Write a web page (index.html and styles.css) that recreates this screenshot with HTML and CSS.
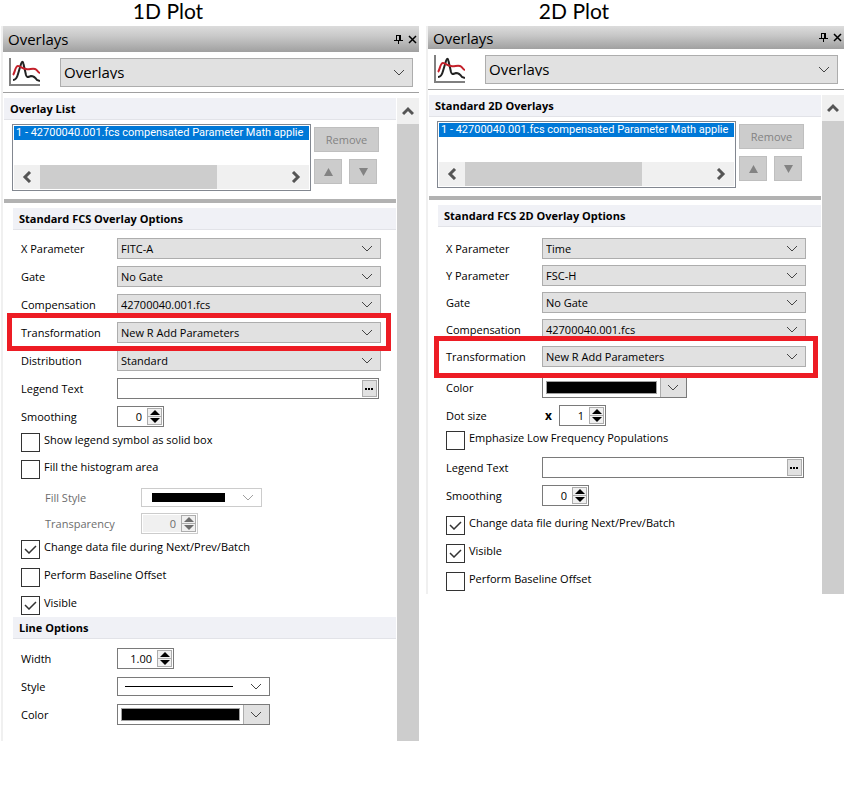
FILE: index.html
```html
<!DOCTYPE html>
<html lang="en">
<head>
  <meta charset="UTF-8" />
  <meta name="viewport" content="width=device-width, initial-scale=1.0"/>
  <title>Overlays</title>
  <link rel="stylesheet" href="styles.css">
</head>
<body>

  <!-- shared icons -->
  <svg class="defs" width="0" height="0">
    <symbol id="plot" viewBox="0 0 31 29">
      <path d="M1 0V28M0 27H31" fill="none" stroke="#808080" stroke-width="2"/>
      <path d="M4 22C7 22 8 20 9 16L12 6C13 3 14 3 14.500 6L17 17C18 20 19 19 22 18C25 18 26 19 28 22L31 23" fill="none" stroke="#222" stroke-width="2"/>
      <path d="M4 17C6 15 6 8 9 8C12 8 13 11 17 11C20 12 23 10 26 11C29 12 28 14 31 15" fill="none" stroke="#c4202a" stroke-width="2"/>
    </symbol>
    <symbol id="pin" viewBox="0 0 9 9">
      <path d="M2 0H7V5H9V6H5V9H4V6H0V5H2ZM3 1V5H5V1Z" fill="#000" fill-rule="evenodd"/>
    </symbol>
    <symbol id="close" viewBox="0 0 9 9">
      <path d="M1 1L8 8M8 1L1 8" stroke="#000" stroke-width="1.500"/>
    </symbol>
    <symbol id="left" viewBox="0 0 10 12">
      <path d="M8 1L3 6L8 11" fill="none" stroke="#555" stroke-width="3"/>
    </symbol>
    <symbol id="right" viewBox="0 0 10 12">
      <path d="M2 1L7 6L2 11" fill="none" stroke="#555" stroke-width="3"/>
    </symbol>
    <symbol id="top" viewBox="0 0 12 10">
      <path d="M1 8L6 3L11 8" fill="none" stroke="#555" stroke-width="3"/>
    </symbol>
    <symbol id="up" viewBox="0 0 10 5"><path d="M5 0L10 5H0Z" fill="currentColor"/></symbol>
    <symbol id="down" viewBox="0 0 10 5"><path d="M0 0H10L5 5Z" fill="currentColor"/></symbol>
    <symbol id="dots" viewBox="0 0 9 2"><path d="M0 0H2V2H0ZM3 0H5V2H3ZM6 0H8V2H6Z" fill="#000"/></symbol>
  </svg>

  <main class="plots">

    <section class="plot plot-1d">
      <h1>1D Plot</h1>
      <div class="panel">
        <header class="titlebar">
          <h2>Overlays</h2>
          <button class="tool" aria-label="Pin"><svg width="9" height="9"><use href="#pin"/></svg></button>
          <button class="tool" aria-label="Close"><svg width="9" height="9"><use href="#close"/></svg></button>
        </header>
        <div class="toolbar">
          <svg width="31" height="29"><use href="#plot"/></svg>
          <select class="page-select" aria-label="Page"><option>Overlays</option></select>
        </div>
        <div class="main">
          <div class="content">
            <h3>Overlay List</h3>
            <div class="overlay-list">
              <div class="listbox">
                <div class="item">1 - 42700040.001.fcs compensated Parameter Math applie</div>
                <div class="hscroll">
                  <svg width="10" height="12"><use href="#left"/></svg>
                  <div class="track"><div class="thumb"></div></div>
                  <svg width="10" height="12"><use href="#right"/></svg>
                </div>
              </div>
              <div class="list-buttons">
                <button class="remove" disabled>Remove</button>
                <button disabled aria-label="Move up"><svg width="9" height="8" viewBox="0 0 10 5" preserveAspectRatio="none"><path d="M5 0L10 5H0Z" fill="#838383"/></svg></button>
                <button disabled aria-label="Move down"><svg width="9" height="8" viewBox="0 0 10 5" preserveAspectRatio="none"><path d="M0 0H10L5 5Z" fill="#838383"/></svg></button>
              </div>
            </div>
            <div class="options">
              <h3>Standard FCS Overlay Options</h3>
              <div class="fields">
                <div class="row">
                  <label for="x1">X Parameter</label>
                  <select id="x1"><option>FITC-A</option></select>
                </div>
                <div class="row">
                  <label for="gate1">Gate</label>
                  <select id="gate1"><option>No Gate</option></select>
                </div>
                <div class="row">
                  <label for="comp1">Compensation</label>
                  <select id="comp1"><option>42700040.001.fcs</option></select>
                </div>
                <div class="row marked">
                  <label for="trans1">Transformation</label>
                  <select id="trans1"><option>New R Add Parameters</option></select>
                </div>
                <div class="row">
                  <label for="dist1">Distribution</label>
                  <select id="dist1"><option>Standard</option></select>
                </div>
                <div class="row">
                  <label for="legend1">Legend Text</label>
                  <div class="box legend">
                    <input type="text" id="legend1">
                    <button aria-label="Edit legend"><svg width="9" height="2"><use href="#dots"/></svg></button>
                  </div>
                </div>
                <div class="row close">
                  <label for="smooth1">Smoothing</label>
                  <div class="box spin">
                    <input type="text" id="smooth1" value="0">
                    <div class="arrows">
                      <button aria-label="Increase"><svg width="10" height="5"><use href="#up"/></svg></button>
                      <button aria-label="Decrease"><svg width="10" height="5"><use href="#down"/></svg></button>
                    </div>
                  </div>
                </div>
                <label class="check tight"><input type="checkbox"> Show legend symbol as solid box</label>
                <label class="check tight"><input type="checkbox"> Fill the histogram area</label>
                <div class="sub">
                  <div class="row">
                    <label for="fill1">Fill Style</label>
                    <div class="box picker fill">
                      <span class="swatch"></span>
                      <select id="fill1" disabled><option></option></select>
                    </div>
                  </div>
                  <div class="row">
                    <label for="transp1">Transparency</label>
                    <div class="box spin wide">
                      <input type="text" id="transp1" value="0" disabled>
                      <div class="arrows">
                        <button disabled aria-label="Increase"><svg width="10" height="5"><use href="#up"/></svg></button>
                        <button disabled aria-label="Decrease"><svg width="10" height="5"><use href="#down"/></svg></button>
                      </div>
                    </div>
                  </div>
                </div>
                <label class="check"><input type="checkbox" checked> Change data file during Next/Prev/Batch</label>
                <label class="check"><input type="checkbox"> Perform Baseline Offset</label>
                <label class="check"><input type="checkbox" checked> Visible</label>
              </div>
              <h3>Line Options</h3>
              <div class="fields line-fields">
                <div class="row">
                  <label for="width1">Width</label>
                  <div class="box spin wide">
                    <input type="text" id="width1" value="1.00">
                    <div class="arrows">
                      <button aria-label="Increase"><svg width="10" height="5"><use href="#up"/></svg></button>
                      <button aria-label="Decrease"><svg width="10" height="5"><use href="#down"/></svg></button>
                    </div>
                  </div>
                </div>
                <div class="row">
                  <label for="style1">Style</label>
                  <div class="box picker line">
                    <span class="swatch"></span>
                    <select id="style1"><option></option></select>
                  </div>
                </div>
                <div class="row">
                  <label for="color1">Color</label>
                  <div class="box picker color">
                    <span class="swatch"></span>
                    <select id="color1"><option></option></select>
                  </div>
                </div>
              </div>
            </div>
          </div>
          <div class="vscroll"><div class="up"><svg width="12" height="10"><use href="#top"/></svg></div></div>
        </div>
      </div>
    </section>

    <section class="plot plot-2d">
      <h1>2D Plot</h1>
      <div class="panel">
        <header class="titlebar">
          <h2>Overlays</h2>
          <button class="tool" aria-label="Pin"><svg width="9" height="9"><use href="#pin"/></svg></button>
          <button class="tool" aria-label="Close"><svg width="9" height="9"><use href="#close"/></svg></button>
        </header>
        <div class="toolbar">
          <svg width="31" height="29"><use href="#plot"/></svg>
          <select class="page-select" aria-label="Page"><option>Overlays</option></select>
        </div>
        <div class="main">
          <div class="content">
            <h3>Standard 2D Overlays</h3>
            <div class="overlay-list">
              <div class="listbox">
                <div class="item">1 - 42700040.001.fcs compensated Parameter Math applie</div>
                <div class="hscroll">
                  <svg width="10" height="12"><use href="#left"/></svg>
                  <div class="track"><div class="thumb"></div></div>
                  <svg width="10" height="12"><use href="#right"/></svg>
                </div>
              </div>
              <div class="list-buttons">
                <button class="remove" disabled>Remove</button>
                <button disabled aria-label="Move up"><svg width="9" height="8" viewBox="0 0 10 5" preserveAspectRatio="none"><path d="M5 0L10 5H0Z" fill="#838383"/></svg></button>
                <button disabled aria-label="Move down"><svg width="9" height="8" viewBox="0 0 10 5" preserveAspectRatio="none"><path d="M0 0H10L5 5Z" fill="#838383"/></svg></button>
              </div>
            </div>
            <div class="options">
              <h3>Standard FCS 2D Overlay Options</h3>
              <div class="fields">
                <div class="row close">
                  <label for="x2">X Parameter</label>
                  <select id="x2"><option>Time</option></select>
                </div>
                <div class="row close">
                  <label for="y2">Y Parameter</label>
                  <select id="y2"><option>FSC-H</option></select>
                </div>
                <div class="row close">
                  <label for="gate2">Gate</label>
                  <select id="gate2"><option>No Gate</option></select>
                </div>
                <div class="row close">
                  <label for="comp2">Compensation</label>
                  <select id="comp2"><option>42700040.001.fcs</option></select>
                </div>
                <div class="row marked">
                  <label for="trans2">Transformation</label>
                  <select id="trans2"><option>New R Add Parameters</option></select>
                </div>
                <div class="row">
                  <label for="color2">Color</label>
                  <div class="box picker color">
                    <span class="swatch"></span>
                    <select id="color2"><option></option></select>
                  </div>
                </div>
                <div class="row snug">
                  <label for="dot2">Dot size</label>
                  <b class="times">x</b>
                  <div class="box spin">
                    <input type="text" id="dot2" value="1">
                    <div class="arrows">
                      <button aria-label="Increase"><svg width="10" height="5"><use href="#up"/></svg></button>
                      <button aria-label="Decrease"><svg width="10" height="5"><use href="#down"/></svg></button>
                    </div>
                  </div>
                </div>
                <label class="check tight"><input type="checkbox"> Emphasize Low Frequency Populations</label>
                <div class="row">
                  <label for="legend2">Legend Text</label>
                  <div class="box legend">
                    <input type="text" id="legend2">
                    <button aria-label="Edit legend"><svg width="9" height="2"><use href="#dots"/></svg></button>
                  </div>
                </div>
                <div class="row loose">
                  <label for="smooth2">Smoothing</label>
                  <div class="box spin">
                    <input type="text" id="smooth2" value="0">
                    <div class="arrows">
                      <button aria-label="Increase"><svg width="10" height="5"><use href="#up"/></svg></button>
                      <button aria-label="Decrease"><svg width="10" height="5"><use href="#down"/></svg></button>
                    </div>
                  </div>
                </div>
                <label class="check"><input type="checkbox" checked> Change data file during Next/Prev/Batch</label>
                <label class="check"><input type="checkbox" checked> Visible</label>
                <label class="check"><input type="checkbox"> Perform Baseline Offset</label>
              </div>
            </div>
          </div>
          <div class="vscroll"><div class="up"><svg width="12" height="10"><use href="#top"/></svg></div></div>
        </div>
      </div>
    </section>

  </main>

</body>
</html>
```
FILE: styles.css
```css
* {
  box-sizing: border-box;
}

body {
  margin: 0;
  background: white;
  font-family: "Open Sans", "Noto Sans", sans-serif;
  font-size: 11px;
  line-height: 14px;
  color: black;
}

h1, h2, h3 {
  margin: 0;
}

svg {
  display: block;
  flex: none;
}

.defs {
  position: absolute;
}

input, select, button {
  font: inherit;
  color: inherit;
  margin: 0;
  padding: 0;
  border: none;
  border-radius: 0;
  background: none;
}

button {
  display: flex;
  align-items: center;
  justify-content: center;
}

.plots {
  display: grid;
  grid-template-columns: minmax(0, 1fr) minmax(0, 1fr);
  gap: 7px;
  align-items: start;
  padding: 0 6px 0 1px;
}

.plot h1 {
  height: 26px;
  padding-right: 84px;
  font-family: Lato, sans-serif;
  font-size: 21px;
  font-weight: normal;
  line-height: 22px;
  text-align: center;
}

.plot-2d h1 {
  padding-right: 122px;
}

.panel {
  border-left: 2px solid #f0f0f0;
}

/* title bar and page selector */
.titlebar {
  display: flex;
  align-items: center;
  gap: 5px;
  height: 26px;
  padding: 0 2px 0 5px;
  background: linear-gradient(#dcdcdc, #c8c8c8 40%, #a0a0a0);
}

.plot-2d .titlebar {
  height: 23px;
}

.titlebar h2 {
  flex: 1;
  font-size: 15px;
  font-weight: normal;
  line-height: 22px;
}

.toolbar {
  display: flex;
  align-items: center;
  gap: 20px;
  height: 41px;
  padding: 0 6px;
  border-bottom: 1px solid #a0a0a0;
}

select {
  appearance: none;
  height: 21px;
  padding: 0 24px 0 3px;
  border: 1px solid #adadad;
  background: #e1e1e1 url("data:image/svg+xml,%3Csvg xmlns='http://www.w3.org/2000/svg' width='12' height='7'%3E%3Cpath d='M1 1L6 6L11 1' fill='none' stroke='%23444'/%3E%3C/svg%3E") no-repeat right 7px center;
}

select:disabled {
  opacity: 0.5;
}

.page-select {
  flex: 1;
  min-width: 0;
  height: 29px;
  font-size: 15px;
}

.main {
  display: flex;
  margin-top: 5px;
}

.content {
  flex: 1;
  min-width: 0;
  padding: 0 1px;
}

.vscroll {
  width: 22px;
  background: #cdcdcd;
}

.vscroll .up {
  display: flex;
  align-items: center;
  justify-content: center;
  height: 26px;
  background: #f0f0f0;
}

h3 {
  height: 22px;
  padding-left: 6px;
  border-bottom: 1px solid #e2e3e8;
  background: #f0f1f6;
  font-size: 11px;
  line-height: 21px;
}

/* overlay list */
.overlay-list {
  display: flex;
  gap: 3px;
  padding: 4px 17px 8px 8px;
  border-bottom: 4px solid #b2b2b2;
}

.listbox {
  display: flex;
  flex: 1;
  flex-direction: column;
  justify-content: space-between;
  min-width: 0;
  height: 67px;
  padding: 1px;
  border: 1px solid #828790;
}

.item {
  overflow: hidden;
  padding-left: 2px;
  background: #0078d7;
  color: white;
  font-family: Roboto, sans-serif;
  white-space: nowrap;
}

.hscroll {
  display: flex;
  align-items: center;
  gap: 8px;
  height: 24px;
  padding: 0 8px;
  background: #f0f0f0;
}

.track {
  flex: 1;
  height: 24px;
}

.thumb {
  width: 73%;
  height: 24px;
  background: #cdcdcd;
}

.list-buttons {
  display: flex;
  flex-wrap: wrap;
  align-content: flex-start;
  gap: 7px;
  width: 65px;
  padding-top: 3px;
}

.list-buttons button {
  width: 28px;
  height: 25px;
  border: 1px solid #bfbfbf;
  background: #ccc;
  color: #838383;
}

.list-buttons .remove {
  width: 65px;
}

/* option rows */
.options {
  padding: 5px 0 0 9px;
}

.fields {
  padding: 8px 15px 0 8px;
}

.fields.line-fields {
  padding-top: 9px;
}

.plot-2d .fields {
  padding-top: 11px;
}

.row {
  position: relative;
  display: flex;
  align-items: center;
  min-height: 21px;
  margin-bottom: 7px;
}

.row.close {
  margin-bottom: 6px;
}

.row.snug {
  margin-bottom: 5px;
}

.row.loose {
  margin-bottom: 10px;
}

.row label {
  width: 96px;
}

.row > select {
  flex: 1;
  min-width: 0;
}

.marked::after {
  content: "";
  position: absolute;
  inset: -9px -10px -8px -14px;
  border: 5px solid #ed1c24;
  pointer-events: none;
  z-index: 1;
}

.plot-2d .marked {
  margin-bottom: 10px;
}

.plot-2d .marked::after {
  inset: -10px -12px -11px -12px;
}

.box {
  display: flex;
  align-items: center;
  height: 21px;
  padding: 1px;
  border: 1px solid #7a7a7a;
}

.box input {
  flex: 1;
  min-width: 0;
  height: 17px;
}

.legend {
  flex: 1;
  margin-right: 2px;
}

.legend button {
  width: 15px;
  height: 17px;
  border: 1px solid #adadad;
  background: #e1e1e1;
}

.spin {
  width: 47px;
}

.spin.wide {
  width: 57px;
}

.spin input {
  padding-right: 5px;
  text-align: right;
}

.arrows {
  width: 15px;
  border: 1px solid #adadad;
  background: #f0f0f0;
}

.arrows button {
  width: 13px;
  height: 7px;
}

.arrows button + button {
  height: 8px;
  border-top: 1px solid #adadad;
}

.times {
  width: 17px;
  padding-left: 3px;
  font-size: 12px;
}

.picker {
  width: 153px;
  padding: 0;
}

.plot-2d .picker {
  width: 145px;
}

.picker select {
  width: 26px;
  height: 19px;
  padding: 0;
  border-width: 0 0 0 1px;
}

.swatch {
  flex: 1;
  height: 13px;
  margin: 0 3px;
  border: 1px solid #a0a0a0;
  background: black;
}

.picker.line,
.picker.fill {
  height: 19px;
}

.picker.line select,
.picker.fill select {
  height: 17px;
  border: none;
  background-color: white;
}

.line .swatch {
  height: 1px;
  margin: 0 10px 0 7px;
  border: none;
}

.picker.fill {
  width: 121px;
}

.fill .swatch {
  height: 9px;
  margin: 0 10px;
  border: none;
}

.sub {
  padding: 0 0 1px 24px;
  color: #6d6d6d;
}

.sub .row {
  margin-bottom: 5px;
}

.sub .box {
  border-color: #ccc;
}

.sub .spin input {
  background: #f0f0f0;
}

/* check boxes */
.check {
  display: flex;
  gap: 4px;
  height: 19px;
  margin-bottom: 9px;
}

.check.tight {
  margin-bottom: 8px;
}

.plot-2d .check.tight {
  margin-bottom: 7px;
}

.check:last-child {
  margin-bottom: 2px;
}

.check input {
  appearance: none;
  width: 19px;
  height: 19px;
  border: 1px solid #333;
}

.check input:checked {
  background: url("data:image/svg+xml,%3Csvg xmlns='http://www.w3.org/2000/svg' width='13' height='9'%3E%3Cpath d='M1 4L5 8L12 1' fill='none' stroke='%23333' stroke-width='1.500'/%3E%3C/svg%3E") no-repeat center;
}

.fields:last-child {
  padding-bottom: 9px;
}

.plot-2d .fields:last-child {
  padding-bottom: 1px;
}
```
